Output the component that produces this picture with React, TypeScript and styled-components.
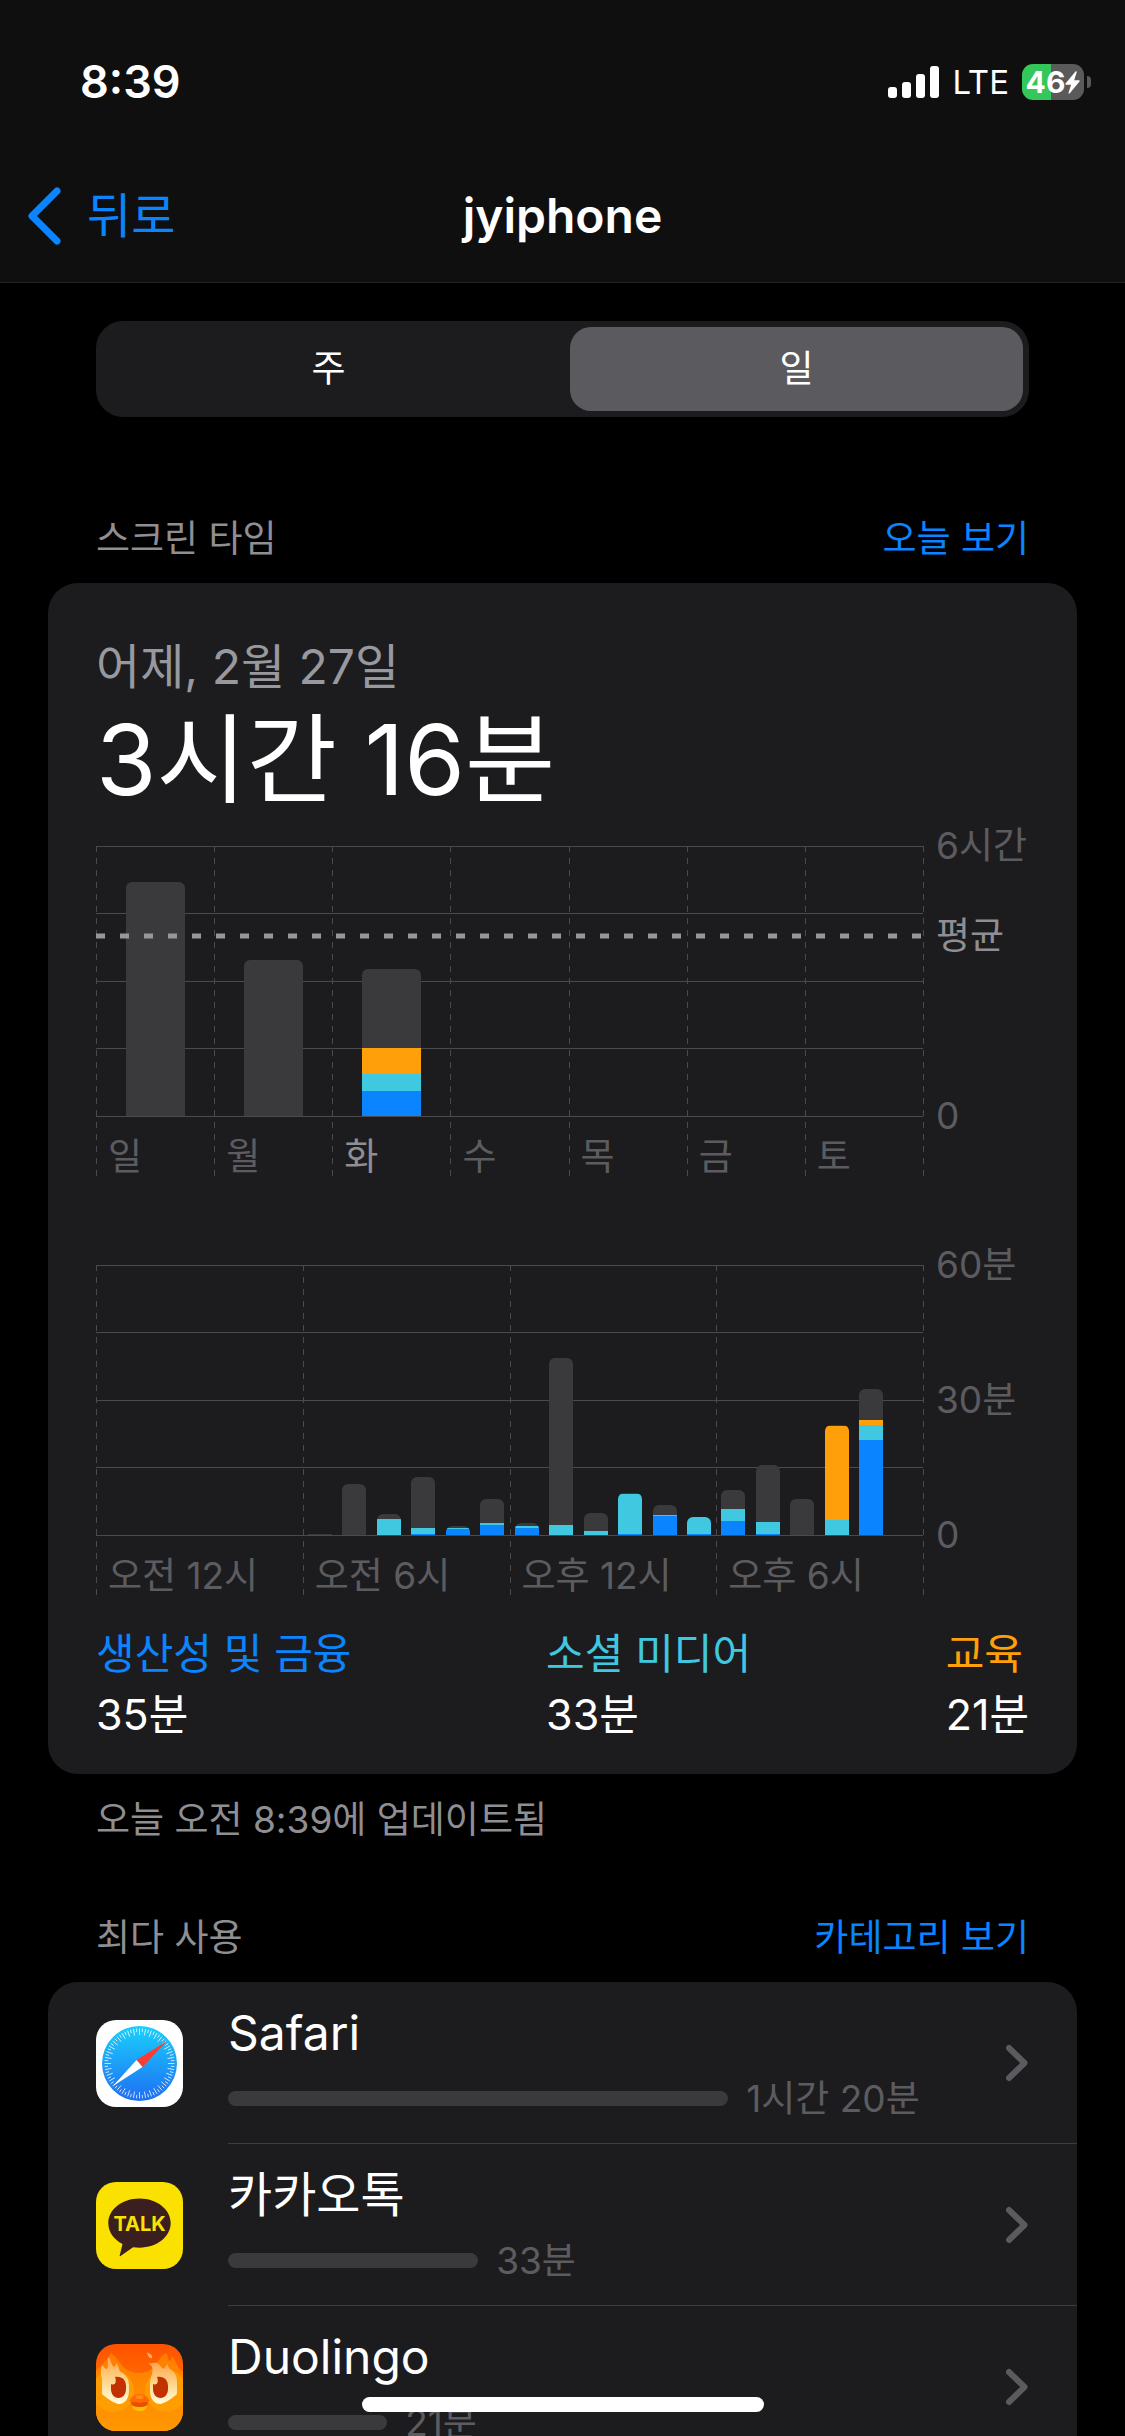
import React from "react";
import styled, { createGlobalStyle } from "styled-components";

const color = {
  bg: "#000000",
  bar: "#0f0f0f",
  card: "#1c1c1e",
  line: "#4a4a4c",
  fill: "#3a3a3c",
  dim: "#5c5c60",
  muted: "#8e8e93",
  date: "#98989f",
  white: "#ffffff",
  blue: "#0a84ff",
  teal: "#40c8e0",
  orange: "#ff9f0a",
};

const GlobalStyle = createGlobalStyle`
  * { box-sizing: border-box; }
  body {
    margin: 0;
    background: ${color.bg};
    color: ${color.white};
    font-family: Inter, "Noto Sans CJK KR", sans-serif;
  }
  button {
    border: 0;
    padding: 0;
    background: none;
    color: inherit;
    font: inherit;
    cursor: pointer;
  }
  a { color: inherit; text-decoration: none; }
  h1, h2, p, ul { margin: 0; padding: 0; font-weight: 400; }
  ul { list-style: none; }
`;

/* ---------- frame ---------- */

const Screen = styled.div`
  height: 100vh;
  display: flex;
  flex-direction: column;
  overflow: hidden;
`;

const Header = styled.header`
  flex: none;
  background: ${color.bar};
  border-bottom: 1px solid #232324;
`;

const StatusBar = styled.div`
  height: 150px;
  padding: 14px 34px 0 80px;
  display: flex;
  align-items: center;
  justify-content: space-between;
`;

const Clock = styled.span`
  font-size: 45px;
  line-height: 56px;
  font-weight: 600;
`;

const StatusIcons = styled.div`
  display: flex;
  align-items: center;
  gap: 13px;
`;

const Carrier = styled.span`
  font-size: 33px;
  line-height: 44px;
`;

const Battery = styled.div`
  display: flex;
  align-items: center;
  gap: 3px;
`;

const BatteryBody = styled.div`
  width: 62px;
  height: 36px;
  border-radius: 11px;
  display: flex;
  align-items: center;
  justify-content: center;
  background: linear-gradient(to right, #34c759 0 46%, #5a5a5a 46%);
  font-size: 30px;
  line-height: 36px;
  font-weight: 700;
`;

const BatteryTip = styled.div`
  width: 4px;
  height: 12px;
  border-radius: 0 6px 6px 0;
  background: #5a5a5a;
`;

const NavBar = styled.nav`
  height: 132px;
  padding: 0 28px;
  display: grid;
  grid-template-columns: 1fr auto 1fr;
  align-items: center;
`;

const BackButton = styled.button`
  justify-self: start;
  display: flex;
  align-items: center;
  gap: 25px;
  color: ${color.blue};
  font-size: 48px;
  line-height: 64px;
`;

const Title = styled.h1`
  font-size: 48px;
  line-height: 64px;
  font-weight: 600;
`;

const Content = styled.main`
  flex: 1;
  min-height: 0;
  padding: 38px 48px 0;
  overflow: auto;
  scrollbar-width: none;
`;

const HomeIndicator = styled.div`
  position: fixed;
  left: 50%;
  bottom: 24px;
  width: 402px;
  height: 15px;
  margin-left: -201px;
  border-radius: 8px;
  background: ${color.white};
`;

/* ---------- segmented control ---------- */

const Segments = styled.div`
  margin: 0 48px;
  padding: 6px;
  display: grid;
  grid-template-columns: 1fr 1fr;
  gap: 15px;
  border-radius: 27px;
  background: ${color.card};
`;

const Segment = styled.button<{ $selected?: boolean }>`
  height: 84px;
  border-radius: 21px;
  font-size: 37px;
  line-height: 48px;
  background: ${(p) => (p.$selected ? "#5b5a5f" : "transparent")};
`;

/* ---------- sections ---------- */

const SectionHead = styled.div<{ $gap: number }>`
  margin: ${(p) => p.$gap}px 48px 20px;
  display: flex;
  justify-content: space-between;
  font-size: 37px;
  line-height: 48px;
`;

const SectionTitle = styled.h2`
  font-size: inherit;
  color: ${color.muted};
`;

const SectionLink = styled.a`
  color: ${color.blue};
`;

const Card = styled.section`
  border-radius: 30px;
  background: ${color.card};
`;

const UsageCard = styled(Card)`
  padding: 52px 48px 30px;
`;

const DateLine = styled.p`
  color: ${color.date};
  font-size: 48px;
  line-height: 64px;
`;

const Total = styled.p`
  font-size: 98px;
  line-height: 122px;
`;

const Footnote = styled.p`
  margin: 22px 48px 0;
  color: ${color.muted};
  font-size: 37px;
  line-height: 48px;
`;

/* ---------- charts ---------- */

const PLOT_HEIGHT = 270;
const LABEL_HEIGHT = 61;

const ChartRow = styled.div<{ $gap: number }>`
  margin-top: ${(p) => p.$gap}px;
  display: grid;
  grid-template-columns: 1fr 106px;
`;

const Plot = styled.div`
  display: grid;
  grid-template-rows: ${PLOT_HEIGHT}px ${LABEL_HEIGHT}px;
`;

const GridLines = styled.svg`
  grid-area: 1 / 1 / 3 / 2;
  width: 100%;
  height: 100%;
  overflow: visible;
`;

const AverageLine = styled.svg`
  grid-area: 1 / 1;
  width: 100%;
  height: 100%;
`;

const Bars = styled.div<{ $count: number }>`
  grid-area: 1 / 1;
  display: grid;
  grid-template-columns: repeat(${(p) => p.$count}, 1fr);
  align-items: end;
  justify-items: center;
`;

const Bar = styled.div<{ $width: number }>`
  width: ${(p) => p.$width}px;
  border-radius: 6px 6px 0 0;
  overflow: hidden;
`;

const Part = styled.div<{ $fill: string }>`
  background: ${(p) => p.$fill};
`;

const XLabels = styled.div<{ $count: number }>`
  grid-area: 2 / 1;
  display: grid;
  grid-template-columns: repeat(${(p) => p.$count}, 1fr);
  padding-top: 17px;
`;

const XLabel = styled.span<{ $active?: boolean }>`
  padding-left: 12px;
  color: ${(p) => (p.$active ? color.muted : color.dim)};
  font-size: 37px;
  line-height: 48px;
  white-space: nowrap;
`;

const YAxis = styled.div`
  height: ${PLOT_HEIGHT}px;
  padding-left: 13px;
  display: grid;
  align-items: start;
`;

const YLabel = styled.span<{ $strong?: boolean }>`
  grid-area: 1 / 1;
  color: ${(p) => (p.$strong ? color.muted : color.dim)};
  font-size: 37px;
  line-height: 48px;
  white-space: nowrap;
`;

const Legend = styled.ul`
  margin-top: 28px;
  display: flex;
  justify-content: space-between;
`;

const LegendItem = styled.li`
  font-size: 43px;
  line-height: 60px;
`;

const LegendName = styled.p<{ $tint: string }>`
  color: ${(p) => p.$tint};
  font-size: 42px;
`;

/* ---------- app list ---------- */

const AppRow = styled.a`
  height: 162px;
  padding-left: 48px;
  display: flex;
  align-items: center;
  gap: 45px;
`;

const AppIcon = styled.svg`
  flex: none;
  width: 87px;
  height: 87px;
`;

const AppBody = styled.div<{ $last?: boolean }>`
  flex: 1;
  height: 162px;
  padding-right: 48px;
  display: flex;
  align-items: center;
  gap: 20px;
  border-bottom: 1px solid ${(p) => (p.$last ? "transparent" : "#3d3d40")};
`;

const AppInfo = styled.div`
  flex: 1;
  display: grid;
  gap: 8px;
`;

const AppName = styled.span`
  font-size: 48px;
  line-height: 64px;
`;

const Usage = styled.div`
  display: flex;
  align-items: center;
  gap: 18px;
  color: ${color.dim};
  font-size: 37px;
  line-height: 52px;
  white-space: nowrap;
`;

const UsageBar = styled.div`
  height: 15px;
  border-radius: 8px;
  background: ${color.fill};
`;

/* ---------- data ---------- */

/* Each bar lists its parts from the top down: [colour, height in pixels]. */
type Stack = [string, number][];

const { fill: G, orange: O, teal: T, blue: B } = color;

const week: Stack[] = [
  [[G, 234]],
  [[G, 156]],
  [[G, 79], [O, 26], [T, 17], [B, 25]],
  [],
  [],
  [],
  [],
];

const hours: Stack[] = [
  [], [], [], [], [], [],
  [[G, 1]],
  [[G, 51]],
  [[G, 5], [T, 16]],
  [[G, 51], [T, 6], [B, 1]],
  [[G, 2], [T, 1], [B, 6]],
  [[G, 24], [T, 2], [B, 10]],
  [[G, 3], [T, 2], [B, 7]],
  [[G, 167], [T, 10]],
  [[G, 18], [T, 4]],
  [[G, 1], [T, 40], [B, 1]],
  [[G, 10], [T, 1], [B, 19]],
  [[T, 17], [B, 1]],
  [[G, 19], [T, 12], [B, 14]],
  [[G, 57], [T, 12], [B, 1]],
  [[G, 36]],
  [[G, 1], [O, 94], [T, 15]],
  [[G, 31], [O, 5], [T, 15], [B, 95]],
  [],
];

interface Tick {
  text: string;
  share: number;
  strong?: boolean;
}

interface ChartProps {
  bars: Stack[];
  barWidth: number;
  labels: string[];
  activeLabel?: string;
  ticks: Tick[];
  average?: number;
  gap: number;
}

function Chart({ bars, barWidth, labels, activeLabel, ticks, average, gap }: ChartProps) {
  return (
    <ChartRow $gap={gap}>
      <Plot>
        <GridLines aria-hidden="true" stroke={color.line} shapeRendering="crispEdges">
          {[0, 67, 135, 202, 270].map((y) => (
            <line key={y} x1="0" x2="100%" y1={y + 0.5} y2={y + 0.5} />
          ))}
          <g transform="translate(0.5 0)">
            {[...labels, "end"].map((label, i) => (
              <line
                key={label}
                x1={`${(i * 100) / labels.length}%`}
                x2={`${(i * 100) / labels.length}%`}
                y1="0"
                y2="100%"
                strokeDasharray="6 6"
              />
            ))}
          </g>
        </GridLines>
        <Bars $count={bars.length}>
          {bars.map((stack, i) => (
            <Bar key={i} $width={barWidth}>
              {stack.map(([tint, height]) => (
                <Part key={tint} $fill={tint} style={{ height }} />
              ))}
            </Bar>
          ))}
        </Bars>
        {average !== undefined && (
          <AverageLine aria-hidden="true">
            <line
              x1="0"
              x2="100%"
              y1={PLOT_HEIGHT * (1 - average)}
              y2={PLOT_HEIGHT * (1 - average)}
              stroke="#97979b"
              strokeWidth="5"
              strokeDasharray="9 15"
            />
          </AverageLine>
        )}
        <XLabels $count={labels.length}>
          {labels.map((label) => (
            <XLabel key={label} $active={label === activeLabel}>
              {label}
            </XLabel>
          ))}
        </XLabels>
      </Plot>
      <YAxis>
        {ticks.map(({ text, share, strong }) => (
          <YLabel key={text} $strong={strong} style={{ marginTop: PLOT_HEIGHT * (1 - share) - 24 }}>
            {text}
          </YLabel>
        ))}
      </YAxis>
    </ChartRow>
  );
}

/* ---------- icons ---------- */

function SafariIcon() {
  const marks = Array.from({ length: 72 }, (_, i) => i);
  return (
    <AppIcon viewBox="0 0 87 87" aria-hidden="true">
      <defs>
        <linearGradient id="sea" x1="0" y1="0" x2="0" y2="1">
          <stop offset="0" stopColor="#1ad0fb" />
          <stop offset="1" stopColor="#1e6ef4" />
        </linearGradient>
      </defs>
      <rect width="87" height="87" rx="20" fill="#fff" />
      <circle cx="43.5" cy="43.5" r="37.5" fill="url(#sea)" />
      <g stroke="#fff" strokeWidth="0.8" opacity="0.9">
        {marks.map((i) => (
          <line
            key={i}
            x1="43.5"
            x2="43.5"
            y1="8.5"
            y2={i % 2 ? 12 : 15}
            transform={`rotate(${i * 5} 43.5 43.5)`}
          />
        ))}
      </g>
      <path d="M71 21 L40.5 40 L46.5 47 Z" fill="#ff3b30" />
      <path d="M17 66 L40.5 40 L46.5 47 Z" fill="#fff" />
    </AppIcon>
  );
}

function TalkIcon() {
  return (
    <AppIcon viewBox="0 0 87 87" aria-hidden="true">
      <rect width="87" height="87" rx="20" fill="#fae100" />
      <path
        d="M43.5 16.5c17.4 0 31.2 11 31.2 24.6S60.9 65.7 43.5 65.7c-2.200 0-4.300-.2-6.400-.5L24.500 74c-.6.4-1 .1-.8-.6l2.800-11.300C17.800 57.700 12.300 50 12.300 41.100c0-13.600 13.800-24.600 31.200-24.600z"
        fill="#3b1e1e"
      />
      <text
        x="43.5"
        y="49"
        textAnchor="middle"
        fontFamily="Inter, sans-serif"
        fontSize="20"
        fontWeight="700"
        fill="#fae100"
      >
        TALK
      </text>
    </AppIcon>
  );
}

function OwlIcon() {
  return (
    <AppIcon viewBox="0 0 87 87" aria-hidden="true">
      <defs>
        <linearGradient id="sky" x1="0" y1="0" x2="0" y2="1">
          <stop offset="0" stopColor="#ff5200" />
          <stop offset="0.5" stopColor="#ff6f00" />
          <stop offset="1" stopColor="#ff9800" />
        </linearGradient>
        <linearGradient id="face" x1="0" y1="0" x2="0" y2="1">
          <stop offset="0" stopColor="#ff7d00" />
          <stop offset="1" stopColor="#ff9800" />
        </linearGradient>
        <linearGradient id="flame" x1="0" y1="0" x2="0" y2="1">
          <stop offset="0" stopColor="#ffa64d" />
          <stop offset="0.5" stopColor="#ffd58a" />
          <stop offset="1" stopColor="#fffce0" />
        </linearGradient>
        <clipPath id="tile">
          <rect width="87" height="87" rx="20" />
        </clipPath>
      </defs>
      <g clipPath="url(#tile)">
        <rect width="87" height="87" fill="url(#sky)" />
        <path
          d="M0 27C4 22 10 18 15 9c6 5 9 10 13 15 6 4 10 5 15.500 5S54 27 59 22c3-4 5-10 11-13 3 3 1 7 4 8 2-1 1-3 2-5 5 6 5 12 11 16v59H0z"
          fill="url(#face)"
        />
        <circle cx="17" cy="47" r="21" fill="#ffa300" opacity="0.75" />
        <circle cx="70" cy="47" r="21" fill="#ffa300" opacity="0.75" />
        <path
          d="M6 50V34C4 29 5 25 6 21c2 2 3 4 5 4 2-3 0-8 1-12 3 2 3 8 6 10 2-1 2-3 2-4 4 4 2 7 5 9 5 3 8 7 8 13v6c0 7-4 13-10 13-4 0-14-7-17-10z"
          fill="url(#flame)"
        />
        <path
          d="M81 50V38c0-6-2-10-7-13-2-2-2-3-2-5-2 1-3 3-4 5-3-1-4-5-7-6-3-1-5 1-9 0 5 3 5 6 4 11-1 3-2 6-2 10v7c0 7 4 13 10 13 4 0 14-7 17-10z"
          fill="url(#flame)"
        />
        <path
          d="M19 33c7-1 11 3 11 9v3c0 5-3 9-7.500 9S15 50 15 45v-5c4 2 6-2 4-7z"
          fill="#c23200"
        />
        <path
          d="M61 33c7-1 11 3 11 9v3c0 5-3 9-7.500 9S57 50 57 45v-5c4 2 6-2 4-7z"
          fill="#c23200"
        />
        <path d="M51 8c2 2 6 2 5 6-2 1-4-1-5-6z" fill="#ffb066" />
        <path d="M36 61h15c0 4-3 6-7.500 6S36 65 36 61z" fill="#ffc000" />
        <path d="M35 58h17c0 4-3 5-8.500 5S35 62 35 58z" fill="#e94f00" />
        <path d="M33 57c3-5 6-7 10.500-7S51 52 54 57c-3 2-6 0-10.500 2C39 57 36 59 33 57z" fill="#ff6a00" />
        <ellipse cx="43.5" cy="53" rx="4" ry="2" fill="#ff8c1a" />
      </g>
    </AppIcon>
  );
}

const apps = [
  { name: "Safari", time: "1시간 20분", share: 66, icon: <SafariIcon /> },
  { name: "카카오톡", time: "33분", share: 33, icon: <TalkIcon /> },
  { name: "Duolingo", time: "21분", share: 21, icon: <OwlIcon /> },
];

const categories = [
  { name: "생산성 및 금융", time: "35분", tint: color.blue },
  { name: "소셜 미디어", time: "33분", tint: color.teal },
  { name: "교육", time: "21분", tint: color.orange },
];

export default function App() {
  return (
    <Screen>
      <GlobalStyle />
      <Header>
        <StatusBar>
          <Clock>8:39</Clock>
          <StatusIcons>
            <svg width="51" height="33" viewBox="0 0 51 33" fill="#fff" aria-hidden="true">
              <rect x="0" y="21" width="9" height="11" rx="3" />
              <rect x="14" y="16" width="9" height="16" rx="3" />
              <rect x="28" y="8" width="9" height="24" rx="3" />
              <rect x="42" y="0" width="9" height="32" rx="3" />
            </svg>
            <Carrier>LTE</Carrier>
            <Battery>
              <BatteryBody>
                46
                <svg width="15" height="23" viewBox="0 0 15 23" fill="#fff" aria-hidden="true">
                  <path d="M10.5.5.5 12.500c-.4.6-.1 1.200.6 1.200h5L3.600 21.600c-.3 1 .6 1.300 1.200.6L14.500 10.400c.5-.6.1-1.200-.6-1.200H9.200L11.700 1.200c.3-.9-.6-1.300-1.200-.7z" />
                </svg>
              </BatteryBody>
              <BatteryTip />
            </Battery>
          </StatusIcons>
        </StatusBar>
        <NavBar>
          <BackButton type="button">
            <svg width="34" height="58" viewBox="0 0 34 58" fill="none" aria-hidden="true">
              <path
                d="M29 4 4 29 29 54"
                stroke={color.blue}
                strokeWidth="7"
                strokeLinecap="round"
                strokeLinejoin="round"
              />
            </svg>
            뒤로
          </BackButton>
          <Title>jyiphone</Title>
        </NavBar>
      </Header>

      <Content>
        <Segments>
          <Segment type="button" aria-pressed="false">주</Segment>
          <Segment type="button" aria-pressed="true" $selected>일</Segment>
        </Segments>

        <SectionHead $gap={98}>
          <SectionTitle>스크린 타임</SectionTitle>
          <SectionLink href="#today">오늘 보기</SectionLink>
        </SectionHead>
        <UsageCard>
          <DateLine>어제, 2월 27일</DateLine>
          <Total>3시간 16분</Total>
          <Chart
            gap={25}
            bars={week}
            barWidth={59}
            labels={["일", "월", "화", "수", "목", "금", "토"]}
            activeLabel="화"
            average={4 / 6}
            ticks={[
              { text: "6시간", share: 1 },
              { text: "평균", share: 4 / 6, strong: true },
              { text: "0", share: 0 },
            ]}
          />
          <Chart
            gap={88}
            bars={hours}
            barWidth={24}
            labels={["오전 12시", "오전 6시", "오후 12시", "오후 6시"]}
            ticks={[
              { text: "60분", share: 1 },
              { text: "30분", share: 0.5 },
              { text: "0", share: 0 },
            ]}
          />
          <Legend>
            {categories.map(({ name, time, tint }) => (
              <LegendItem key={name}>
                <LegendName $tint={tint}>{name}</LegendName>
                <p>{time}</p>
              </LegendItem>
            ))}
          </Legend>
        </UsageCard>
        <Footnote>오늘 오전 8:39에 업데이트됨</Footnote>

        <SectionHead $gap={70}>
          <SectionTitle>최다 사용</SectionTitle>
          <SectionLink href="#categories">카테고리 보기</SectionLink>
        </SectionHead>
        <Card as="ul">
          {apps.map(({ name, time, share, icon }, i) => (
            <li key={name}>
              <AppRow href={`#app-${i}`}>
                {icon}
                <AppBody $last={i === apps.length - 1}>
                  <AppInfo>
                    <AppName>{name}</AppName>
                    <Usage>
                      <UsageBar style={{ width: `${share}%` }} />
                      {time}
                    </Usage>
                  </AppInfo>
                  <svg width="23" height="40" viewBox="0 0 23 40" fill="none" aria-hidden="true">
                    <path
                      d="M3 5 18.5 20 3 35"
                      stroke="#5a5a5f"
                      strokeWidth="6"
                      strokeLinecap="round"
                      strokeLinejoin="round"
                    />
                  </svg>
                </AppBody>
              </AppRow>
            </li>
          ))}
        </Card>
      </Content>
      <HomeIndicator />
    </Screen>
  );
}
